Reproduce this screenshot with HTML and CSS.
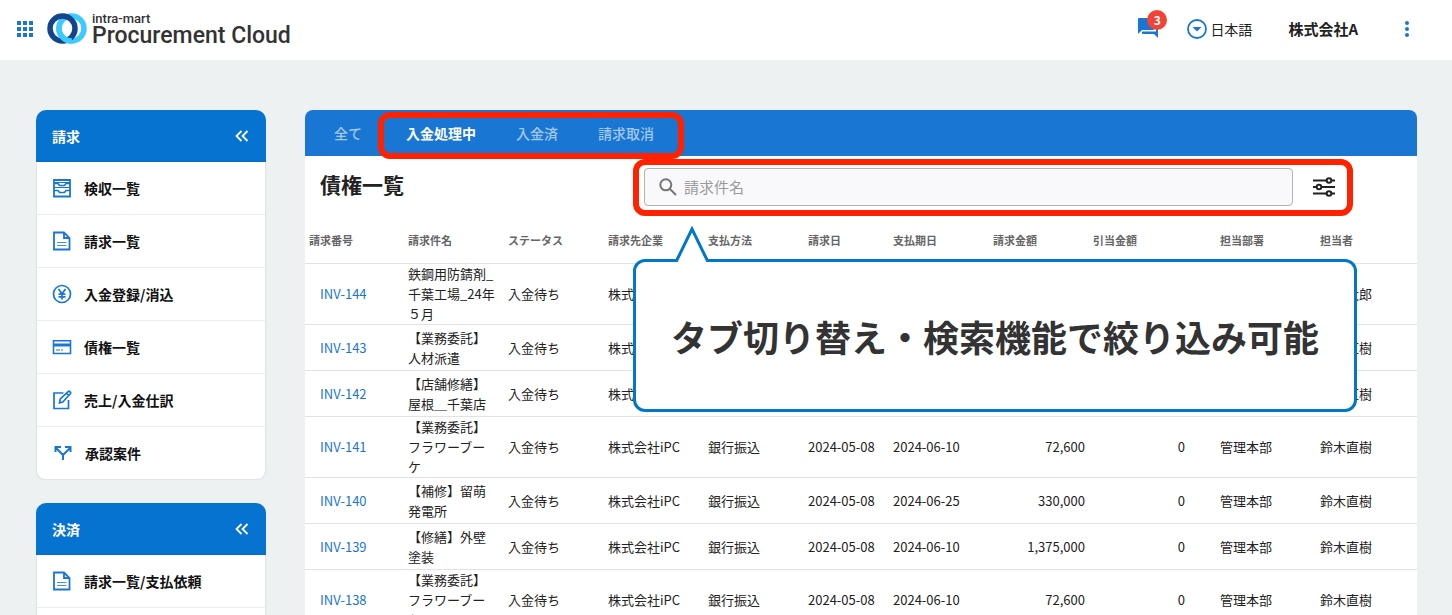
FILE: index.html
```html
<!DOCTYPE html>
<html lang="ja">
<head>
<meta charset="utf-8">
<title>intra-mart Procurement Cloud</title>
<link rel="stylesheet" href="styles.css">
</head>
<body>
<svg class="sprite" aria-hidden="true">
  <symbol id="doc" viewBox="0 0 20 20">
    <path d="M2 1.500h10L17.500 7v11.500H2z M12 1.500V7h5.500" fill="none" stroke="currentColor" stroke-width="1.800"/>
    <path d="M5 11.500h9.500M5 14.500h9.500" stroke="currentColor" stroke-width="1.200" opacity=".8"/>
  </symbol>
  <symbol id="collapse" viewBox="0 0 14 12">
    <path d="M6.500 1 1.500 6l5 5M12.500 1l-5 5 5 5" fill="none" stroke="currentColor" stroke-width="1.800"/>
  </symbol>
</svg>

<header class="topbar">
  <button class="icon-button apps" aria-label="アプリ">
    <svg width="16" height="16" viewBox="0 0 16 16" fill="currentColor"><path d="M0 0h4v4H0zM6 0h4v4H6zM12 0h4v4h-4zM0 6h4v4H0zM6 6h4v4H6zM12 6h4v4h-4zM0 12h4v4H0zM6 12h4v4H6zM12 12h4v4h-4z"/></svg>
  </button>
  <a class="brand" href="#">
    <svg width="40" height="32" viewBox="0 0 40 32" fill="none" stroke-width="5.500">
      <circle cx="24.500" cy="15.500" r="12.500" stroke="#3dcbff"/>
      <circle cx="15.500" cy="15.500" r="12.500" stroke="#14458c"/>
      <path d="M14 8.700A12.500 12.500 0 0 0 25 28" stroke="#3dcbff"/>
    </svg>
    <span class="brand-text"><span class="brand-small">intra-mart</span><span class="brand-large">Procurement Cloud</span></span>
  </a>
  <div class="topbar-tools">
    <button class="icon-button chat" aria-label="メッセージ">
      <svg width="20" height="20" viewBox="0 0 20 20" fill="currentColor"><path d="M0 1q0-1 1-1h14q1 0 1 1v10q0 1-1 1H4l-4 4z"/><path d="M18 4h1q1 0 1 1v15l-4-4H5q-1 0-1-1v-1.500h14z"/></svg>
      <span class="badge">3</span>
    </button>
    <button class="language">
      <svg width="20" height="20" viewBox="0 0 20 20"><circle cx="10" cy="10" r="9" fill="none" stroke="#1976d2" stroke-width="1.800"/><path d="M5.500 8h9L10 12.500z" fill="#1976d2"/></svg>
      <span>日本語</span>
    </button>
    <span class="company">株式会社A</span>
    <button class="icon-button" aria-label="メニュー">
      <svg width="4" height="16" viewBox="0 0 4 16" fill="currentColor"><circle cx="2" cy="2" r="2"/><circle cx="2" cy="8" r="2"/><circle cx="2" cy="14" r="2"/></svg>
    </button>
  </div>
</header>

<div class="page">
  <aside class="sidebar">
    <nav class="menu">
      <h2 class="menu-title">請求<button class="collapse" aria-label="請求を閉じる"><svg width="14" height="12"><use href="#collapse"/></svg></button></h2>
      <ul class="menu-list">
        <li><a href="#"><svg width="20" height="20" viewBox="0 0 20 20" fill="none" stroke="currentColor" stroke-width="1.800"><path d="M2 2h16v16.500H2z"/><path d="M2 4.500h16M2 9.500h16" stroke-width="1.200"/><path d="M2 5.500h4l1.500 2h5l1.500-2h4M2 12.500h4l1.500 2h5l1.500-2h4" stroke-width="1.600"/></svg>検収一覧</a></li>
        <li><a href="#"><svg width="20" height="20"><use href="#doc"/></svg>請求一覧</a></li>
        <li><a href="#"><svg width="20" height="20" viewBox="0 0 20 20" fill="none" stroke="currentColor" stroke-width="1.700"><circle cx="10" cy="10" r="8.500"/><path d="M6.500 5 10 9.800 13.500 5M10 9.800V15.500M6.500 10.200h7M6.500 12.800h7"/></svg>入金登録/消込</a></li>
        <li><a href="#"><svg width="20" height="20" viewBox="0 0 20 20" fill="none" stroke="currentColor"><path d="M1.500 3.800h17v12.700h-17z" stroke-width="1.600"/><path d="M2 8h16" stroke-width="3"/><path d="M4 13h4M9 13h2" stroke-width="1.200"/></svg>債権一覧</a></li>
        <li><a href="#"><svg width="20" height="20" viewBox="0 0 20 20" fill="none" stroke="currentColor" stroke-width="1.700"><path d="M11.500 3H2v15.500h14.500V10"/><path d="m7.500 12.800.8-3.800 7.800-7.400q1-.8 2 .2t.2 2L10.800 12zM14.500 3.300l2.200 2.200"/></svg>売上/入金仕訳</a></li>
        <li class="offset"><a href="#"><svg width="18" height="18" viewBox="0 0 18 18" fill="none" stroke="currentColor" stroke-width="2"><path d="M9 16v-5L2.500 4.500M9 11l6.500-6.500M1.500 8V3H7M11 3h5.500v5"/></svg>承認案件</a></li>
      </ul>
    </nav>
    <nav class="menu">
      <h2 class="menu-title">決済<button class="collapse" aria-label="決済を閉じる"><svg width="14" height="12"><use href="#collapse"/></svg></button></h2>
      <ul class="menu-list">
        <li><a href="#"><svg width="20" height="20"><use href="#doc"/></svg>請求一覧/支払依頼</a></li>
        <li><a href="#"></a></li>
      </ul>
    </nav>
  </aside>

  <main class="panel">
    <div class="tabs">
      <button class="tab">全て</button>
      <div class="tab-group">
        <button class="tab active">入金処理中</button>
        <button class="tab">入金済</button>
        <button class="tab">請求取消</button>
        <span class="highlight highlight-tabs"></span>
      </div>
    </div>
    <div class="toolbar">
      <h1 class="title">債権一覧</h1>
      <div class="search-area">
        <label class="search">
          <svg width="18" height="18" viewBox="0 0 18 18" fill="none" stroke="currentColor" stroke-width="2"><circle cx="6.800" cy="6.800" r="5.500"/><path d="m11 11 6 6"/></svg>
          <input type="search" placeholder="請求件名" aria-label="請求件名">
        </label>
        <button class="icon-button filter" aria-label="絞り込み">
          <svg width="24" height="20" viewBox="0 0 24 20" fill="#fff" stroke="currentColor" stroke-width="2"><path d="M1 3.500h22M1 10h22M1 16.500h22"/><circle cx="17" cy="3.500" r="2.300"/><circle cx="7" cy="10" r="2.300"/><circle cx="17" cy="16.500" r="2.300"/></svg>
        </button>
        <span class="highlight highlight-search"></span>
      </div>
    </div>
    <table class="invoices">
      <colgroup><col class="c-id"><col class="c-std"><col class="c-std"><col class="c-std"><col class="c-std"><col class="c-date"><col class="c-std"><col class="c-std"><col class="c-std"><col class="c-dept"><col></colgroup>
      <thead>
        <tr><th>請求番号</th><th>請求件名</th><th>ステータス</th><th>請求先企業</th><th>支払方法</th><th>請求日</th><th>支払期日</th><th>請求金額</th><th>引当金額</th><th class="dept">担当部署</th><th>担当者</th></tr>
      </thead>
      <tbody>
        <tr><td class="id"><a href="#">INV-144</a></td><td class="name">鉄鋼用防錆剤_千葉工場_24年５月</td><td>入金待ち</td><td>株式会社iPC</td><td></td><td></td><td></td><td class="num"></td><td class="num"></td><td class="dept"></td><td>鈴木太郎</td></tr>
        <tr><td class="id"><a href="#">INV-143</a></td><td class="name">【業務委託】人材派遣</td><td>入金待ち</td><td>株式会社iPC</td><td></td><td></td><td></td><td class="num"></td><td class="num"></td><td class="dept"></td><td>鈴木直樹</td></tr>
        <tr><td class="id"><a href="#">INV-142</a></td><td class="name">【店舗修繕】屋根＿千葉店</td><td>入金待ち</td><td>株式会社iPC</td><td></td><td></td><td></td><td class="num"></td><td class="num"></td><td class="dept"></td><td>鈴木直樹</td></tr>
        <tr><td class="id"><a href="#">INV-141</a></td><td class="name">【業務委託】フラワーブーケ</td><td>入金待ち</td><td>株式会社iPC</td><td>銀行振込</td><td>2024-05-08</td><td>2024-06-10</td><td class="num">72,600</td><td class="num">0</td><td class="dept">管理本部</td><td>鈴木直樹</td></tr>
        <tr><td class="id"><a href="#">INV-140</a></td><td class="name">【補修】留萌発電所</td><td>入金待ち</td><td>株式会社iPC</td><td>銀行振込</td><td>2024-05-08</td><td>2024-06-25</td><td class="num">330,000</td><td class="num">0</td><td class="dept">管理本部</td><td>鈴木直樹</td></tr>
        <tr><td class="id"><a href="#">INV-139</a></td><td class="name">【修繕】外壁塗装</td><td>入金待ち</td><td>株式会社iPC</td><td>銀行振込</td><td>2024-05-08</td><td>2024-06-10</td><td class="num">1,375,000</td><td class="num">0</td><td class="dept">管理本部</td><td>鈴木直樹</td></tr>
        <tr><td class="id"><a href="#">INV-138</a></td><td class="name">【業務委託】フラワーブーケ</td><td>入金待ち</td><td>株式会社iPC</td><td>銀行振込</td><td>2024-05-08</td><td>2024-06-10</td><td class="num">72,600</td><td class="num">0</td><td class="dept">管理本部</td><td>鈴木直樹</td></tr>
      </tbody>
    </table>
    <div class="callout">
      <svg class="callout-tail" width="36" height="36" viewBox="0 0 36 36"><path d="M2 36 18 2l16 34z" fill="#fff"/><path d="M2 34.500h.7L18 3l15.300 31.500h.7" fill="none" stroke="#0077c8" stroke-width="3"/></svg>
      タブ切り替え・検索機能で絞り込み可能
    </div>
  </main>
</div>
</body>
</html>
```
FILE: styles.css
```css
* { box-sizing: border-box; }

body {
  margin: 0;
  height: 100vh;
  overflow: hidden;
  background: #edf1f2;
  color: #222;
  font: 13px/20px "Noto Sans CJK JP", sans-serif;
}

button, input { font: inherit; color: inherit; }
button { border: 0; background: none; padding: 0; cursor: pointer; }
a { color: inherit; text-decoration: none; }
svg { display: block; flex: none; }
.sprite { position: absolute; width: 0; height: 0; }

.topbar {
  display: flex;
  align-items: center;
  height: 60px;
  padding: 0 43px 2px 17px;
  background: #fff;
}
.icon-button { color: #1976d2; }
.brand { display: flex; align-items: center; gap: 5px; margin-left: 14px; }
.brand-text { display: flex; flex-direction: column; padding-top: 2px; font-family: Roboto, sans-serif; font-weight: 500; color: #333; }
.brand-small { font-size: 13px; line-height: 12px; }
.brand-large { font-size: 23px; line-height: 22px; }
.topbar-tools { display: flex; align-items: center; margin-left: auto; }
.chat { position: relative; margin-bottom: 2px; }
.badge {
  position: absolute;
  top: -8px;
  left: 9px;
  width: 20px;
  height: 20px;
  border-radius: 50%;
  background: #f44336;
  color: #fff;
  font-size: 12px;
  font-weight: 700;
}
.language { display: flex; align-items: center; gap: 3px; margin-left: 29px; font-size: 14px; }
.company { margin: 0 47px 0 36px; font-size: 15px; font-weight: 700; }

.page { display: flex; align-items: flex-start; gap: 39px; padding: 50px 35px 0 36px; }
.sidebar { flex: 0 0 230px; display: flex; flex-direction: column; gap: 24px; }
.menu-title {
  display: flex;
  align-items: center;
  justify-content: space-between;
  height: 52px;
  margin: 0;
  padding: 0 17px 0 16px;
  border-radius: 10px 10px 0 0;
  background: #0773d1;
  color: #fff;
  font-size: 14px;
  font-weight: 700;
}
.menu-list {
  margin: 0 1px;
  padding: 0;
  list-style: none;
  border-radius: 0 0 8px 8px;
  background: #fff;
  box-shadow: 0 0 2px rgba(0, 0, 0, 0.2);
}
.menu-list a {
  display: flex;
  align-items: center;
  gap: 12px;
  height: 52px;
  padding-left: 15px;
  color: #111;
  font-size: 14px;
  font-weight: 700;
}
.menu-list li + li { border-top: 1px solid #ececee; }
.menu-list .offset a { padding-left: 17px; gap: 13px; }
.menu-list svg { color: #1976d2; }

.panel { position: relative; flex: 1; min-width: 0; border-radius: 8px 8px 0 0; background: #fff; }
.tabs { display: flex; height: 46px; padding-left: 5px; border-radius: 8px 8px 0 0; background: #1976d2; }
.tab-group { position: relative; display: flex; }
.tab { min-width: 76px; padding: 0 20px; color: #a3c8ed; font-size: 14px; font-weight: 500; }
.tab.active { color: #fff; font-weight: 700; }
.highlight { position: absolute; border: 6px solid #ff2200; border-radius: 12px; pointer-events: none; }
.highlight-tabs { inset: 2px -10px -3px -8px; z-index: 1; }
.highlight-search { inset: -9px -17px -10px -11px; }

.toolbar { display: grid; grid-template-columns: 324px 1fr; align-items: start; padding: 12px 81px 11px 15px; }
.title { margin: 0; font-size: 21px; line-height: 32px; font-weight: 700; }
.search-area { position: relative; display: flex; align-items: center; gap: 19px; }
.search {
  flex: 1;
  display: flex;
  align-items: center;
  gap: 7px;
  height: 38px;
  padding: 0 14px;
  border: 1px solid #b3b3b3;
  border-radius: 4px;
  background: #f9f9fb;
  color: #757575;
}
.search input { flex: 1; min-width: 0; padding: 0; border: 0; outline: 0; background: none; font-size: 15px; }
.search input::placeholder { color: #9a9a9c; }
.filter { color: #222; }

.invoices { width: 100%; table-layout: fixed; border-collapse: separate; border-spacing: 0; }
.c-id { width: 99px; }
.c-std { width: 100px; }
.c-date { width: 85px; }
.c-dept { width: 127px; }
.invoices th, .invoices td { padding: 0 4px; border-bottom: 1px solid #e2e2e2; text-align: left; vertical-align: middle; }
.invoices th { height: 47px; color: #666; font-size: 11px; font-weight: 700; }
.invoices td { height: 46px; }
.invoices .id { padding-left: 15px; color: #1976d2; }
.invoices .name { padding-right: 7px; }
.invoices .num { text-align: right; }
.invoices .dept { padding-left: 31px; }

.callout {
  position: absolute;
  top: 149px;
  left: 328px;
  right: 60px;
  display: flex;
  align-items: center;
  justify-content: center;
  padding: 49px 0 48px;
  border: 3px solid #0077c8;
  border-radius: 12px;
  background: #fff;
  color: #333;
  font-size: 36px;
  line-height: 50px;
  font-weight: 700;
  white-space: nowrap;
}
.callout-tail { position: absolute; top: -36px; left: 38px; }
```
